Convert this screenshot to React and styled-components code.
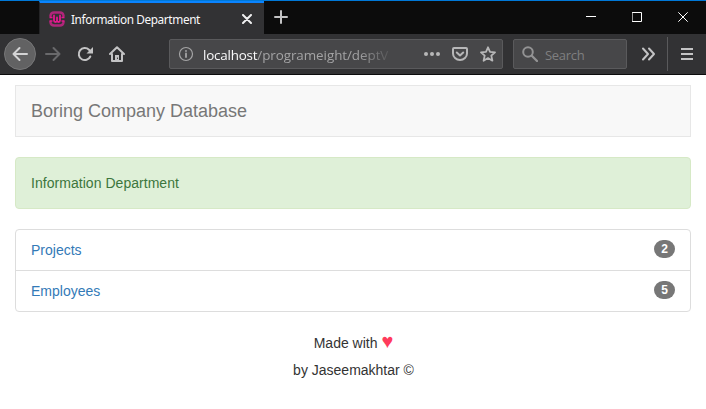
import React from "react";
import styled, { createGlobalStyle } from "styled-components";

const GlobalStyle = createGlobalStyle`
  *, *::before, *::after { box-sizing: border-box; }
  html, body { margin: 0; padding: 0; background: #fff; overflow: hidden; }
  svg { display: block; flex: none; }
`;

const Window = styled.div`
  width: 706px;
  height: 409px;
  display: flex;
  flex-direction: column;
  background: #fff;
  font-family: "Open Sans", "Noto Sans", sans-serif;
`;

const TitleBar = styled.header`
  height: 34px;
  display: flex;
  padding-left: 39px;
  background: #0c0c0c;
  border-top: 1px solid #0078d7;
`;

const Tab = styled.div`
  width: 225px;
  height: 33px;
  display: flex;
  align-items: center;
  padding: 0 12px 0 9px;
  background: #323234;
  border-top: 2px solid #0a84ff;
  border-left: 1px solid #252527;
`;

const TabTitle = styled.span`
  flex: 1;
  margin-left: 6px;
  color: #f9f9fa;
  font-family: "Noto Sans", sans-serif;
  font-size: 11.8px;
  line-height: 18px;
  letter-spacing: -0.38px;
  white-space: nowrap;
`;

const NewTab = styled.div`
  padding: 8px 0 0 9px;
  flex: 1;
`;

const WindowControls = styled.div`
  display: flex;
  gap: 36px;
  padding: 11px 18px 0 0;
`;

const Toolbar = styled.nav`
  height: 41px;
  display: flex;
  align-items: center;
  background: #323234;
  border-bottom: 1px solid #0c0c0d;
  padding: 0 13px 0 4px;
`;

const BackButton = styled.div`
  width: 32px;
  height: 32px;
  flex: none;
  display: flex;
  align-items: center;
  justify-content: center;
  border-radius: 50%;
  background: #626263;
  border: 1px solid #777778;
`;

const NavIcons = styled.div`
  display: flex;
  gap: 16px;
  margin-left: 9px;
`;

const Field = styled.div`
  width: ${(p) => p.$width}px;
  height: 30px;
  flex: none;
  display: flex;
  align-items: center;
  margin-left: ${(p) => p.$gap}px;
  padding: 0 ${(p) => p.$right}px 0 8px;
  background: #474749;
  border: 1px solid #5a5a5c;
  border-radius: 2px;
`;

const Address = styled.span`
  width: 189px;
  margin-left: 9px;
  padding-top: 2px;
  white-space: nowrap;
  font-size: 13.4px;
  line-height: 20px;
  letter-spacing: -0.05px;
  color: #a3a3a4;
  mask-image: linear-gradient(to right, #000 155px, transparent 192px);
`;

const Host = styled.span`
  color: #f9f9fa;
  letter-spacing: -0.2px;
`;

const FieldActions = styled.div`
  display: flex;
  gap: 12px;
  margin-left: auto;
`;

const SearchHint = styled.span`
  margin-left: 7px;
  padding-top: 2px;
  color: #7f7f80;
  font-size: 13px;
  line-height: 20px;
  letter-spacing: -0.3px;
`;

const Divider = styled.span`
  width: 1px;
  height: 34px;
  margin: 0 13px 0 11px;
  background: #5a5a5c;
`;

const Page = styled.main`
  flex: 1;
  padding: 10px 15px 0;
  font-family: "Liberation Sans", Arial, sans-serif;
  font-size: 14px;
  line-height: 20px;
  color: #333;
`;

const Brand = styled.div`
  height: 52px;
  margin-bottom: 20px;
  padding: 15px;
  border: 1px solid #e7e7e7;
  background: #f8f8f8;
  color: #777;
  font-size: 18px;
`;

const Alert = styled.div`
  height: 52px;
  margin-bottom: 20px;
  padding: 15px;
  border: 1px solid #d6e9c6;
  border-radius: 4px;
  background: #dff0d8;
  color: #3c763d;
  letter-spacing: 0.04px;
`;

const List = styled.ul`
  margin: 0 0 21px;
  padding: 0;
  list-style: none;
  border: 1px solid #ddd;
  border-radius: 4px;
`;

const ListItem = styled.li`
  display: flex;
  justify-content: space-between;
  align-items: flex-start;
  padding: 10px 15px;
  color: #337ab7;

  & + & { border-top: 1px solid #ddd; }
`;

const Badge = styled.span`
  min-width: 21px;
  height: 18px;
  padding: 3px 7px;
  border-radius: 10px;
  background: #777;
  color: #fff;
  font-size: 12px;
  font-weight: 700;
  line-height: 12px;
  text-align: center;
`;

const Credit = styled.footer`
  padding-left: 1px;
  text-align: center;
`;

const CreditLine = styled.p`
  margin: 0 0 7px;
  height: 20px;
`;

const Heart = styled.span`
  font-size: 20px;
  line-height: 0;
  color: #ff3b5c;
`;

const Icon = ({ size = 16, color = "#c3c3c4", width = 2, children }) => (
  <svg
    width={size}
    height={size}
    viewBox={`0 0 ${size} ${size}`}
    fill="none"
    stroke={color}
    strokeWidth={width}
    strokeLinecap="round"
    strokeLinejoin="round"
  >
    {children}
  </svg>
);

const Favicon = () => (
  <Icon color="#e5178f" width={1.8}>
    <path
      d="M1.500 5V4.500Q2 1.500 5 1.500H11Q14 1.500 14.500 4.500V5M1.500 11V11.500Q2 14.500 5 14.500H11Q14 14.500 14.500 11.500V11"
      stroke="#b0267a"
      strokeWidth="2.4"
    />
    <path d="M0.500 6.500H3.500M12.500 6.500H15.500M0.500 10H3.500M12.500 10H15.500" strokeLinecap="butt" strokeWidth="1.6" />
    <path d="M5 4.500V9.500Q5 11 6.500 11Q8 11 8 9.500V6.500M8 9.500Q8 11 9.500 11Q11 11 11 9.500V4.500" />
  </Icon>
);

const departments = [
  { name: "Projects", count: 2 },
  { name: "Employees", count: 5 },
];

export default function App() {
  return (
    <Window>
      <GlobalStyle />
      <TitleBar>
        <Tab>
          <Favicon />
          <TabTitle>Information Department</TabTitle>
          <Icon size={10} color="#f0f0f1">
            <path d="M1 1L9 9M9 1L1 9" />
          </Icon>
        </Tab>
        <NewTab>
          <Icon>
            <path d="M8 2V14M2 8H14" />
          </Icon>
        </NewTab>
        <WindowControls>
          <Icon size={10} color="#fff" width={1}>
            <path d="M0 4.500H10" strokeLinecap="butt" />
          </Icon>
          <Icon size={10} color="#fff" width={1}>
            <path d="M.5 .5H9.500V9.500H.5Z" strokeLinejoin="miter" />
          </Icon>
          <Icon size={10} color="#fff" width={1}>
            <path d="M.3 .3L9.700 9.700M9.700 .3L.3 9.700" strokeLinecap="butt" />
          </Icon>
        </WindowControls>
      </TitleBar>

      <Toolbar>
        <BackButton>
          <Icon color="#d4d4d5">
            <path d="M15 8H1.500M7.500 2L1.500 8L7.500 14" />
          </Icon>
        </BackButton>
        <NavIcons>
          <Icon color="#69696b">
            <path d="M1 8H14.500M8.500 2L14.500 8L8.500 14" />
          </Icon>
          <Icon>
            <path d="M13.300 10.500A6 6 0 1 1 12 3.800L13.500 5.300" />
            <path d="M16 1V7.500H9.500Z" fill="#c3c3c4" stroke="none" />
          </Icon>
          <Icon>
            <path d="M1 8L8 1.200L15 8M3 8V15H13V8" />
            <path d="M6 14V9H10V14Z" fill="#c3c3c4" stroke="none" />
            <path d="M8.500 12V12.500" stroke="#323234" strokeWidth="1" />
          </Icon>
        </NavIcons>
        <Field $width={334} $gap={44} $right={6}>
          <Icon color="#a5a5a6" width={1.2}>
            <circle cx="8" cy="8" r="6.500" />
            <path d="M8 7.500V11M8 4.800V5" strokeWidth="1.800" />
          </Icon>
          <Address>
            <Host>localhost</Host>/programeight/deptV
          </Address>
          <FieldActions>
            <Icon>
              <g fill="#b7b7b8" stroke="none">
                <circle cx="2" cy="8" r="2" />
                <circle cx="8" cy="8" r="2" />
                <circle cx="14" cy="8" r="2" />
              </g>
            </Icon>
            <Icon color="#b7b7b8">
              <path d="M2 2H14Q15 2 15 3V7.500A7 6.500 0 0 1 1 7.500V3Q1 2 2 2Z" />
              <path d="M4.800 6.500L8 9.500L11.200 6.500" />
            </Icon>
            <Icon color="#b7b7b8" width={1.8}>
              <path d="M8 1.300L10 5.800L15 6.300L11.300 9.600L12.400 14.700L8 12.100L3.600 14.700L4.700 9.600L1 6.300L6 5.800Z" />
            </Icon>
          </FieldActions>
        </Field>
        <Field $width={114} $gap={10} $right={8}>
          <Icon color="#939394">
            <circle cx="6" cy="6" r="4.800" />
            <path d="M9.800 9.800L15 15" strokeWidth="2.300" />
          </Icon>
          <SearchHint>Search</SearchHint>
        </Field>
        <NavIcons>
          <Icon size={20}>
            <path d="M7 4.500L12 10L7 15.500M13 4.500L18 10L13 15.500" />
          </Icon>
        </NavIcons>
        <Divider />
        <Icon size={12}>
          <path d="M0 1H12M0 6H12M0 11H12" strokeLinecap="butt" />
        </Icon>
      </Toolbar>

      <Page>
        <Brand>Boring Company Database</Brand>
        <Alert>Information Department</Alert>
        <List>
          {departments.map(({ name, count }) => (
            <ListItem key={name}>
              {name}
              <Badge>{count}</Badge>
            </ListItem>
          ))}
        </List>
        <Credit>
          <CreditLine>
            Made with <Heart>♥</Heart>
          </CreditLine>
          <CreditLine>by Jaseemakhtar ©</CreditLine>
        </Credit>
      </Page>
    </Window>
  );
}
